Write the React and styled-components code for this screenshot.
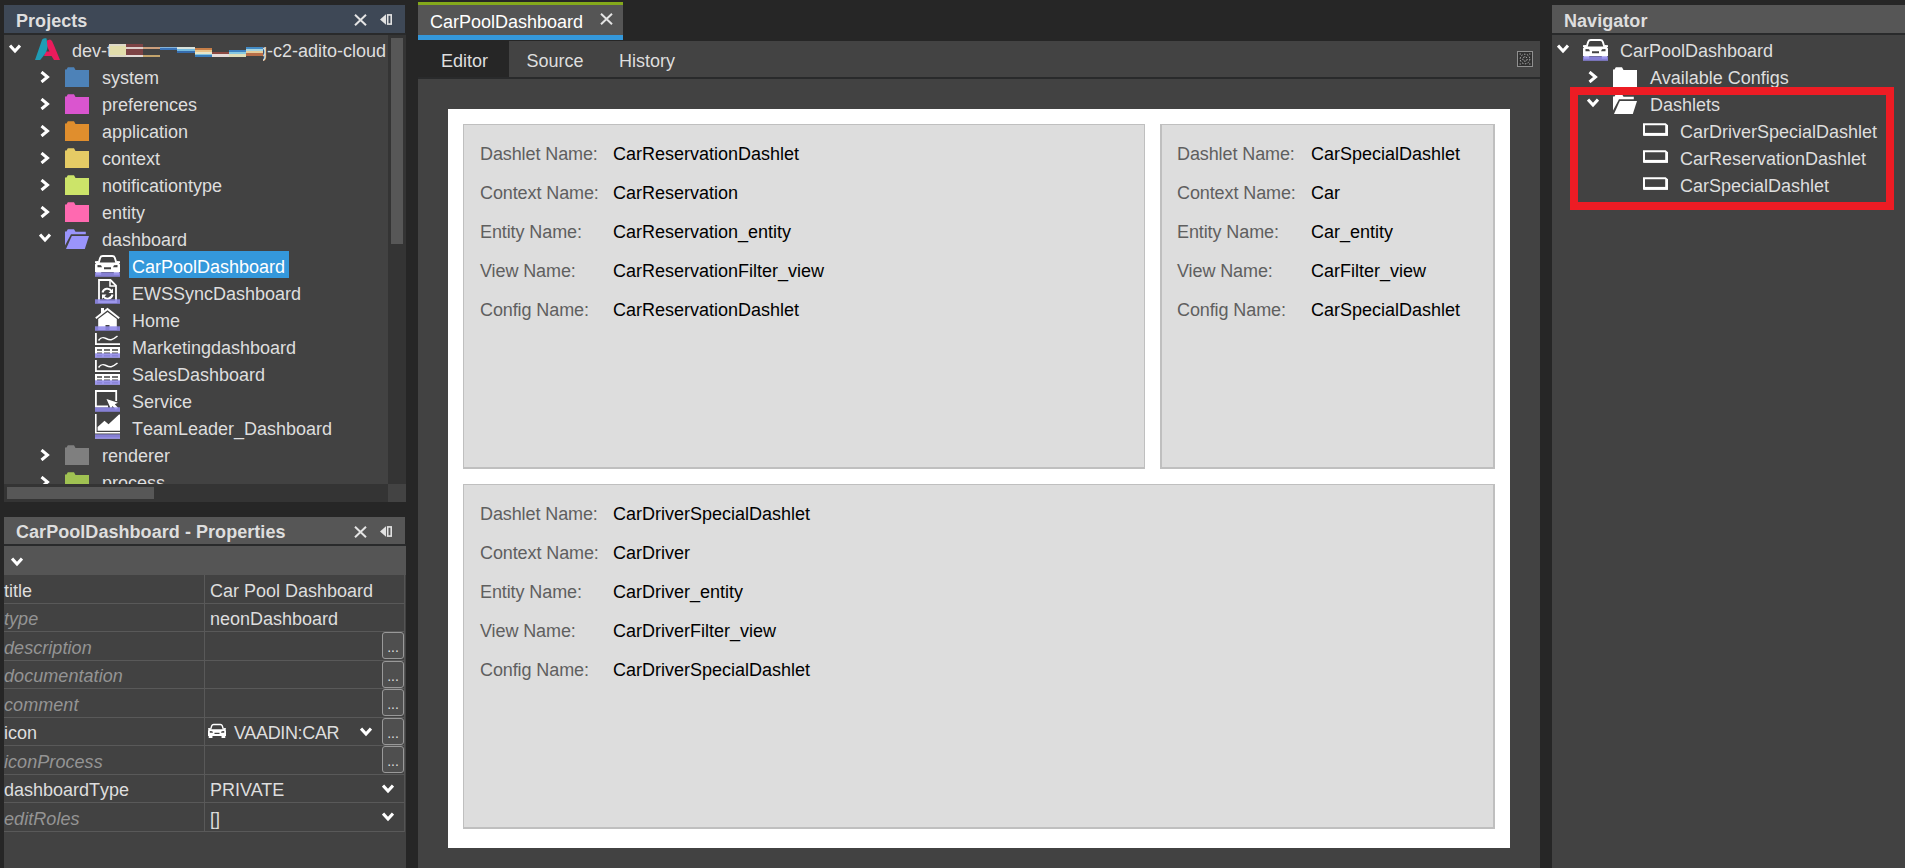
import React from 'react';
import styled, { createGlobalStyle, css } from 'styled-components';

const GlobalStyle = createGlobalStyle`
    * {
        box-sizing: border-box;
    }

    body {
        margin: 0;
        background: #262626;
        overflow: hidden;
    }
`

const Window = styled.div`
    display: flex;
    gap: 12px;
    width: 100%;
    height: 100vh;
    padding-left: 4px;
    background: #262626;
    color: #dedede;
    font-family: 'Liberation Sans', Arial, sans-serif;
    font-size: 18px;
    white-space: nowrap;
    overflow: hidden;
`

const LeftColumn = styled.div`
    display: flex;
    flex-direction: column;
    flex: none;
    gap: 15px;
    width: 402px;
    padding-top: 5px;
`

const Panel = styled.section`
    display: flex;
    flex-direction: column;
    min-height: 0;
    ${({ $grow }) => $grow && css`flex: 1;`}
`

const PanelHeader = styled.header`
    display: flex;
    flex: none;
    height: ${({ $height }) => $height || 28}px;
    margin-right: ${({ $inset }) => $inset || 0}px;
    padding: 0 13px 0 12px;
    background: ${({ $active }) => ($active ? '#3e4856' : '#565656')};
    line-height: ${({ $height }) => ($height ? 30 : 32)}px;
`

const PanelTitle = styled.h2`
    flex: 1;
    margin: 0;
    font-size: 18px;
    font-weight: bold;
    font-kerning: none;
    letter-spacing: .05px;
    line-height: inherit;
`

const HeaderIcons = styled.div`
    display: flex;
    align-items: flex-start;
    gap: 13px;
    padding-top: 9px;
`

const Divider = styled.div`
    flex: none;
    height: 2px;
    background: #292a2b;
`

/* tree */

const ScrollArea = styled.div`
    display: grid;
    grid-template-columns: 384px 18px;
    grid-template-rows: 449px 18px;
    font-kerning: none;
`

const Tree = styled.div`
    background: #424242;
    overflow: hidden;
    ${({ $grow }) => $grow && css`flex: 1;`}
`

const TreeRow = styled.div`
    display: flex;
    height: 27px;
    padding-left: ${({ $level }) => $level * 30}px;
    line-height: 32px;
`

const Handle = styled.div`
    display: flex;
    flex: none;
    justify-content: center;
    width: 31px;
    padding: 9px 9px 0 0;
`

const IconSlot = styled.div`
    flex: none;
    width: 25px;
    height: 27px;
    margin-right: 9px;

    svg {
        display: block;
    }
`

const Label = styled.span`
    display: flex;
    height: 27px;
    padding: 0 4px 0 3px;
    ${({ $selected }) => $selected && css`
        background: #3498db;
        color: #fff;
    `}
`

const Mosaic = styled.svg`
    position: relative;
    z-index: 1;
    flex: none;
    margin: 9px -6px 0 -3px;
`

const VerticalTrack = styled.div`
    padding: 3px;
    background: #343434;
`

const HorizontalTrack = styled.div`
    padding: 3px;
    background: #343434;
`

const VerticalThumb = styled.div`
    height: 206px;
    background: #575757;
`

const HorizontalThumb = styled.div`
    width: 147px;
    height: 12px;
    background: #575757;
`

const Corner = styled.div`
    background: #434343;
`

/* property sheet */

const Sheet = styled.div`
    flex: 1;
    background: #424242;
`

const Category = styled.div`
    height: 29px;
    padding: 11px 0 0 7px;
    background: #555;

    svg {
        display: block;
    }
`

const Property = styled.div`
    display: flex;
    height: ${({ $tall }) => ($tall ? 29 : 28)}px;
    margin-right: 1px;
    border-right: 1px solid #555;
    border-bottom: 1px solid #595959;
    line-height: ${({ $tall }) => ($tall ? 32 : 30)}px;
`

const PropertyName = styled.div`
    width: 201px;
    border-right: 1px solid #595959;
    font-kerning: none;
    ${({ $unset }) => $unset && css`
        color: #949494;
        font-style: italic;
        letter-spacing: .06px;
    `}
`

const PropertyValue = styled.div`
    display: flex;
    flex: 1;
    padding-left: 5px;
`

const ValueText = styled.span`
    flex: 1;
    ${({ $tight }) => $tight && css`letter-spacing: -.35px;`}
`

const ValueIcon = styled.div`
    width: 18px;
    margin: 5px 8px 0 -2px;

    svg {
        display: block;
    }
`

const DropDown = styled.div`
    width: 12px;
    margin: 9px 10px 0 0;

    svg {
        display: block;
    }
`

const MoreButton = styled.button`
    flex: none;
    width: 22px;
    height: 27px;
    padding: 0;
    border: 1px solid #999;
    border-radius: 3px;
    background: #4f4f4f;
    color: #dedede;
    font: 14px/28px 'Liberation Sans', Arial, sans-serif;
`

/* editor */

const EditorColumn = styled.main`
    display: flex;
    flex-direction: column;
    flex: none;
    width: 1122px;
    padding-top: 2px;
`

const FileTab = styled.div`
    display: flex;
    flex: none;
    width: 205px;
    height: 38px;
    padding: 0 10px 0 12px;
    border-top: 3px solid #84a91b;
    border-bottom: 5px solid #3498db;
    background: #555;
    color: #fff;
    line-height: 34px;
    margin-bottom: 1px;

    span {
        flex: 1;
    }

    svg {
        margin-top: 8px;
    }
`

const ViewTabs = styled.nav`
    display: flex;
    flex: none;
    height: 36px;
    padding-right: 7px;
    background: #434343;
    line-height: 40px;
`

const ViewTab = styled.div`
    padding: ${({ $active }) => ($active ? '0 21px 0 23px' : '0 18px 0 17.5px')};
    ${({ $active }) => $active && css`background: #262626;`}
`

const Spacer = styled.div`
    flex: 1;
`

const ToolIcon = styled.svg`
    margin-top: 10px;
`

const Canvas = styled.div`
    flex: 1;
    padding: 30px 30px 0;
    background: #424242;
`

const Paper = styled.div`
    display: grid;
    grid-template-columns: 682px 335px;
    grid-auto-rows: 345px;
    gap: 15px;
    height: 739px;
    padding: 15px;
    background: #fff;
`

const DashletCard = styled.article`
    grid-column: span ${({ $span }) => $span || 1};
    padding: 15px ${({ $edge }) => ($edge ? 15 : 16)}px;
    border: solid #bfbfbf;
    border-width: ${({ $border }) => $border};
    background: #ddd;
`

const Field = styled.div`
    display: grid;
    grid-template-columns: ${({ $wide }) => ($wide ? 134 : 133)}px 1fr;
    height: 39px;
    line-height: 28px;
    color: #000;
`

const FieldLabel = styled.span`
    color: #5f5f5f;
    letter-spacing: -.1px;
`

/* navigator */

const NavColumn = styled.aside`
    display: flex;
    flex-direction: column;
    flex: 1;
    min-width: 0;
    padding-top: 5px;
    position: relative;
`

const Highlight = styled.div`
    position: absolute;
    left: 18px;
    top: 87px;
    width: 324px;
    height: 123px;
    border: 8px solid #ed1c24;
`

const PURPLE = '#8f89e8'

const Down = () => (
    <svg width="12" height="10" viewBox="0 0 12 10">
        <path d="M1 1.5L6 7L11 1.5" fill="none" stroke="#fff" strokeWidth="3.1" />
    </svg>
)

const Right = () => (
    <svg width="10" height="12" viewBox="0 0 10 12">
        <path d="M1.5 1L7.5 6L1.5 11" fill="none" stroke="#fff" strokeWidth="3" />
    </svg>
)

const Close = () => (
    <svg width="13" height="12" viewBox="0 0 13 12">
        <path d="M1 .8L12 11.2M12 .8L1 11.2" stroke="#e4e4e4" strokeWidth="2" />
    </svg>
)

const Minimize = () => (
    <svg width="12" height="11" viewBox="0 0 12 11">
        <path d="M0 5.5L6 .2V10.8Z" fill="#e2e2e2" />
        <rect x="7.7" y=".9" width="3.5" height="9.2" fill="none" stroke="#e2e2e2" strokeWidth="1.6" />
    </svg>
)

const Glyph = ({ children, strip }) => (
    <svg width="25" height="27" viewBox="0 0 25 27">
        {children}
        {strip && <rect x="0" y="21.3" width="25" height="4.5" fill={PURPLE} opacity=".88" />}
    </svg>
)

const CarShape = () => (
    <>
        <path d="M3.6 12L5.2 6.8Q5.8 5 7.8 5H17.2Q19.2 5 19.8 6.8L21.4 12" fill="none" stroke="#fff" strokeWidth="1.9" />
        <path
            fill="#fff"
            fillRule="evenodd"
            d="M0 10.2L3 10L3.5 11.5H21.5L22 10L25 10.2V12H24L25 13.5V21H24V23.8H18.8V21H6.2V23.8H1V21H0V13.5L1 12H0ZM2.5 14V16.3H7L6 14.3ZM22.5 14V16.3H18L19 14.3ZM9 16.3V18.2H16V16.3Z"
        />
    </>
)

const Car = () => <Glyph strip><CarShape /></Glyph>

const SmallCar = () => (
    <svg width="18" height="16" viewBox="0 3 25 22">
        <CarShape />
    </svg>
)

const Sync = () => (
    <Glyph strip>
        <path d="M4 24V2H15.5L21 7.5V24Z" fill="none" stroke="#fff" strokeWidth="1.8" />
        <path d="M15 2V8H21" fill="none" stroke="#fff" strokeWidth="1.5" />
        <path d="M7.5 14.5A5 5 0 0 1 16.5 13M17.5 16.5A5 5 0 0 1 8.5 18.5" fill="none" stroke="#fff" strokeWidth="2" />
        <path d="M18 10.5V15H13.5ZM7 21V16.5H11.5Z" fill="#fff" />
    </Glyph>
)

const Home = () => (
    <Glyph strip>
        <path d="M.8 13.2L12.5 4L24.2 13.2" fill="none" stroke="#fff" strokeWidth="2" />
        <path d="M6 8.5V3H9V6.5L6 9Z" fill="#fff" />
        <path d="M3.2 14L12.5 7L21.8 14V25H14.5V20H10.5V25H3.2Z" fill="#fff" />
    </Glyph>
)

const ChartTable = () => (
    <Glyph strip>
        <path d="M.9 1V12.2H25" fill="none" stroke="#fff" strokeWidth="1.8" />
        <path d="M3.5 8.5C6 5 8 5 11 6.5C15 8.5 17 8.5 22.5 4" fill="none" stroke="#fff" strokeWidth="1.5" />
        <path
            fill="#fff"
            fillRule="evenodd"
            d="M0 15H25V25.5H0ZM2 17.2V18.8H7V17.2ZM9 17.2V18.8H15V17.2ZM17 17.2V18.8H23V17.2ZM2 20.4V21.8H7V20.4ZM9 20.4V21.8H15V20.4ZM17 20.4V21.8H23V20.4ZM2 23.2V24.4H7V23.2ZM9 23.2V24.4H15V23.2ZM17 23.2V24.4H23V23.2Z"
        />
    </Glyph>
)

const Pointer = () => (
    <Glyph strip>
        <path d="M13 20.5H.9V5H21.2V15" fill="none" stroke="#fff" strokeWidth="1.8" />
        <path d="M11.5 13L23 16.8L19.8 18.2L23.2 22L20.8 23.8L17.5 20L15.8 22.8Z" fill="#fff" />
    </Glyph>
)

const AreaChart = () => (
    <Glyph strip>
        <path d="M.8 1V19.8H25" fill="none" stroke="#fff" strokeWidth="1.6" />
        <path d="M2.6 17.8V14L9.5 7.8L13.5 11.2L24 1.5H25V17.8Z" fill="#fff" />
        <path d="M0 25H25" stroke="#fff" />
    </Glyph>
)

const Folder = ({ color }) => (
    <Glyph>
        <path d="M0 7.5H1.5L2.8 5.3H9L10.5 8H24V25H0Z" fill={color} />
    </Glyph>
)

const OpenFolder = ({ color }) => (
    <Glyph>
        <path d="M0 7.5H1.5L2.8 5.3H9L10.5 7.7H20.8V10.2H6L0 21.5Z" fill={color} />
        <path d="M6.8 12H24L19.8 25H1Z" fill={color} />
    </Glyph>
)

const Logo = () => (
    <Glyph>
        <path d="M12 5.5L15 4.5C16.8 4.8 17.8 7.5 18.6 9.5L25 25H19L16.5 21H9L10.5 16.5H14.5L12 11Z" fill="#ea1b5c" />
        <path d="M0 25L6.8 5.5C7.6 3.2 9.5 2.8 11.6 3.5L12.5 12C12 17.5 8.5 21 5.2 25Z" fill="#1f9cb5" />
    </Glyph>
)

const Dashlet = () => (
    <Glyph>
        <path d="M1 8.3H22.3L24 9.8V18.7H1Z" fill="none" stroke="#fff" strokeWidth="2" />
        <path d="M1 18.3H24.8" stroke="#fff" strokeWidth="2.8" />
        <path d="M23.5 9.5V19" stroke="#fff" strokeWidth="2.6" />
    </Glyph>
)

// [x, y, width, height, color]
const mosaic = [
    [0, 0, 17, 13, '#ded9c8'],
    [1, 2, 16, 9, '#e2ddab'],
    [17, 0, 17, 13, '#7d4345'],
    [17, 3, 17, 2, '#ddcfcb'],
    [17, 11, 17, 2, '#e4dcd8'],
    [34, 3, 17, 2, '#cc9f7d'],
    [34, 11, 17, 2, '#c3a46c'],
    [51, 3, 17, 1, '#86b4da'],
    [51, 4, 17, 2, '#3b74b8'],
    [68, 3, 18, 2, '#d9e2dc'],
    [68, 5, 18, 2, '#75bbdf'],
    [68, 7, 18, 2, '#366cae'],
    [86, 4, 17, 2, '#c77f48'],
    [86, 6, 17, 2, '#e9c48a'],
    [86, 8, 17, 2, '#e6e5c9'],
    [86, 10, 17, 1, '#86c5dd'],
    [86, 11, 17, 2, '#397cba'],
    [103, 8, 17, 2, '#8b4a43'],
    [103, 10, 17, 3, '#e6dcda'],
    [120, 6, 17, 2, '#3d82c0'],
    [120, 8, 17, 2, '#87c9e0'],
    [120, 10, 17, 3, '#dfdfb8'],
    [137, 3, 17, 2, '#438bc5'],
    [137, 5, 17, 2, '#a9d5df'],
    [137, 7, 17, 2, '#e5cd9a'],
    [137, 9, 17, 3, '#b86e48'],
    [137, 12, 17, 6, '#424242'],
]

const ProjectName = () => (
    <>
        dev-t
        <Mosaic width="154" height="18" viewBox="0 0 154 18" shapeRendering="crispEdges">
            {mosaic.map(([x, y, w, h, color]) => (
                <rect key={`${x}-${y}`} x={x} y={y} width={w} height={h} fill={color} />
            ))}
        </Mosaic>
        g-c2-adito-cloud
    </>
)

const projectNodes = [
    { level: 0, state: 'open', icon: <Logo />, label: <ProjectName /> },
    { level: 1, state: 'closed', icon: <Folder color="#4d82b8" />, label: 'system' },
    { level: 1, state: 'closed', icon: <Folder color="#da55cf" />, label: 'preferences' },
    { level: 1, state: 'closed', icon: <Folder color="#e08e2d" />, label: 'application' },
    { level: 1, state: 'closed', icon: <Folder color="#e5cb65" />, label: 'context' },
    { level: 1, state: 'closed', icon: <Folder color="#cce469" />, label: 'notificationtype' },
    { level: 1, state: 'closed', icon: <Folder color="#ff69b0" />, label: 'entity' },
    { level: 1, state: 'open', icon: <OpenFolder color="#9a94fb" />, label: 'dashboard' },
    { level: 2, icon: <Car />, label: 'CarPoolDashboard', selected: true },
    { level: 2, icon: <Sync />, label: 'EWSSyncDashboard' },
    { level: 2, icon: <Home />, label: 'Home' },
    { level: 2, icon: <ChartTable />, label: 'Marketingdashboard' },
    { level: 2, icon: <ChartTable />, label: 'SalesDashboard' },
    { level: 2, icon: <Pointer />, label: 'Service' },
    { level: 2, icon: <AreaChart />, label: 'TeamLeader_Dashboard' },
    { level: 1, state: 'closed', icon: <Folder color="#7f7f7f" />, label: 'renderer' },
    { level: 1, state: 'closed', icon: <Folder color="#a0c252" />, label: 'process' },
]

const navigatorNodes = [
    { level: 0, state: 'open', icon: <Car />, label: 'CarPoolDashboard' },
    { level: 1, state: 'closed', icon: <Folder color="#fff" />, label: 'Available Configs' },
    { level: 1, state: 'open', icon: <OpenFolder color="#fff" />, label: 'Dashlets' },
    { level: 2, icon: <Dashlet />, label: 'CarDriverSpecialDashlet' },
    { level: 2, icon: <Dashlet />, label: 'CarReservationDashlet' },
    { level: 2, icon: <Dashlet />, label: 'CarSpecialDashlet' },
]

const properties = [
    { name: 'title', value: 'Car Pool Dashboard' },
    { name: 'type', value: 'neonDashboard', unset: true },
    { name: 'description', unset: true, more: true },
    { name: 'documentation', unset: true, more: true },
    { name: 'comment', unset: true, more: true },
    { name: 'icon', value: 'VAADIN:CAR', icon: true, select: true, more: true },
    { name: 'iconProcess', unset: true, more: true },
    { name: 'dashboardType', value: 'PRIVATE', select: true },
    { name: 'editRoles', value: '[]', unset: true, select: true },
]

const dashlets = [
    {
        border: '1px 1px 2px 1px',
        dashlet: 'CarReservationDashlet',
        context: 'CarReservation',
        entity: 'CarReservation_entity',
        view: 'CarReservationFilter_view',
    },
    {
        border: '1px 2px 2px 2px',
        edge: true,
        dashlet: 'CarSpecialDashlet',
        context: 'Car',
        entity: 'Car_entity',
        view: 'CarFilter_view',
    },
    {
        border: '1px 2px 2px 1px',
        span: 2,
        dashlet: 'CarDriverSpecialDashlet',
        context: 'CarDriver',
        entity: 'CarDriver_entity',
        view: 'CarDriverFilter_view',
    },
]

const TreeNode = ({ level, state, icon, label, selected }) => (
    <TreeRow $level={level}>
        <Handle>
            {state === 'open' && <Down />}
            {state === 'closed' && <Right />}
        </Handle>
        <IconSlot>{icon}</IconSlot>
        <Label $selected={selected}>{label}</Label>
    </TreeRow>
)

const PropertyRow = ({ name, value, unset, icon, select, more, tall }) => (
    <Property $tall={tall}>
        <PropertyName $unset={unset}>{name}</PropertyName>
        <PropertyValue>
            {icon && <ValueIcon><SmallCar /></ValueIcon>}
            <ValueText $tight={icon}>{value}</ValueText>
            {select && <DropDown><Down /></DropDown>}
            {more && <MoreButton>...</MoreButton>}
        </PropertyValue>
    </Property>
)

const DashletPreview = ({ border, edge, span, dashlet, context, entity, view }) => {
    const fields = [
        ['Dashlet Name:', dashlet],
        ['Context Name:', context],
        ['Entity Name:', entity],
        ['View Name:', view],
        ['Config Name:', dashlet],
    ]

    return (
        <DashletCard $border={border} $edge={edge} $span={span}>
            {fields.map(([label, value]) => (
                <Field key={label} $wide={edge}>
                    <FieldLabel>{label}</FieldLabel>
                    <span>{value}</span>
                </Field>
            ))}
        </DashletCard>
    )
}

const App = () => {
    return (
        <Window>
            <GlobalStyle />
            <LeftColumn>
                <Panel>
                    <PanelHeader $active $inset={1}>
                        <PanelTitle>Projects</PanelTitle>
                        <HeaderIcons><Close /><Minimize /></HeaderIcons>
                    </PanelHeader>
                    <Divider />
                    <ScrollArea>
                        <Tree>
                            {projectNodes.map((node, i) => <TreeNode key={i} {...node} />)}
                        </Tree>
                        <VerticalTrack><VerticalThumb /></VerticalTrack>
                        <HorizontalTrack><HorizontalThumb /></HorizontalTrack>
                        <Corner />
                    </ScrollArea>
                </Panel>
                <Panel $grow>
                    <PanelHeader $height={27} $inset={1}>
                        <PanelTitle>CarPoolDashboard - Properties</PanelTitle>
                        <HeaderIcons><Close /><Minimize /></HeaderIcons>
                    </PanelHeader>
                    <Divider />
                    <Sheet>
                        <Category><Down /></Category>
                        {properties.map((property, i) => (
                            <PropertyRow key={property.name} tall={i % 2 === 0} {...property} />
                        ))}
                    </Sheet>
                </Panel>
            </LeftColumn>
            <EditorColumn>
                <FileTab><span>CarPoolDashboard</span><Close /></FileTab>
                <ViewTabs>
                    <ViewTab $active>Editor</ViewTab>
                    <ViewTab>Source</ViewTab>
                    <ViewTab>History</ViewTab>
                    <Spacer />
                    <ToolIcon width="16" height="16" viewBox="0 0 16 16">
                        <rect x=".5" y=".5" width="15" height="15" fill="#303030" stroke="#909090" />
                        <circle cx="8" cy="8" r="4.8" fill="none" stroke="#bbb" strokeDasharray="1.5 1.5" />
                        <circle cx="8" cy="8" r="2.2" fill="none" stroke="#bbb" strokeDasharray="1.5 1" />
                        <path d="M2.5 3h1.5M12 3h1.5M2.5 13h1.5M12 13h1.5" stroke="#999" />
                    </ToolIcon>
                </ViewTabs>
                <Divider />
                <Canvas>
                    <Paper>
                        {dashlets.map((item) => <DashletPreview key={item.dashlet} {...item} />)}
                    </Paper>
                </Canvas>
            </EditorColumn>
            <NavColumn>
                <PanelHeader>
                    <PanelTitle>Navigator</PanelTitle>
                </PanelHeader>
                <Divider />
                <Tree $grow>
                    {navigatorNodes.map((node, i) => <TreeNode key={i} {...node} />)}
                </Tree>
                <Highlight />
            </NavColumn>
        </Window>
    );
};

export default App;
